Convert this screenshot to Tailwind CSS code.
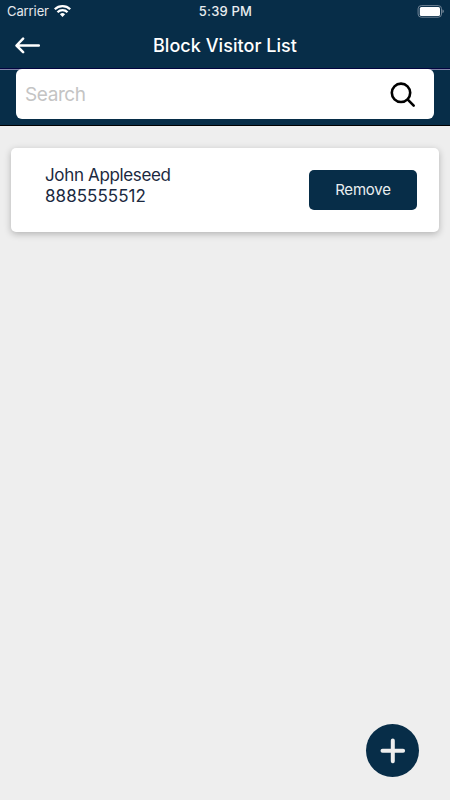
<!DOCTYPE html>
<html lang="en">
<head>
    <meta charset="UTF-8">
    <meta name="viewport" content="width=device-width, initial-scale=1.0">
    <title>Block Visitor List</title>
    <script src="https://cdn.jsdelivr.net/npm/@tailwindcss/browser@4"></script>
</head>
<body class="bg-[#eeeeee] font-[Inter,sans-serif]">
    <div class="relative flex flex-col h-screen overflow-hidden">

        <header class="bg-[#072d48] text-white">
            <!-- Status bar -->
            <div class="grid grid-cols-3 items-center h-[23px] pl-[7px] pr-[6px] text-[13px] leading-none">
                <div class="flex items-center gap-[5px] text-[#e4e8ec]">
                    <span class="tracking-[-0.1px]">Carrier</span>
                    <svg class="w-[17px] h-[12px] mb-[2px]" viewBox="0 0 17 12" fill="none" stroke="#fff" stroke-width="2.3">
                        <path d="M.8 4.3a11 11 0 0 1 15.4 0"/>
                        <path d="M3.5 7.3a7 7 0 0 1 10 0"/>
                        <path d="M8.5 12 5.9 9.3a3.7 3.7 0 0 1 5.2 0z" fill="#fff" stroke="none"/>
                    </svg>
                </div>
                <span class="text-center font-medium text-[#e9edf0] tracking-[0.2px]">5:39 PM</span>
                <svg class="justify-self-end -mt-px w-[27px] h-[13px]" viewBox="0 0 27 13">
                    <rect x="1.1" y=".6" width="23.4" height="11.6" rx="3.2" fill="none" stroke="#708395"/>
                    <rect x="2.8" y="2" width="20.2" height="9" rx="1.6" fill="#fff"/>
                    <path d="M25.5 4.4c1.7.6 1.7 3.2 0 3.8z" fill="#8595a3"/>
                </svg>
            </div>

            <!-- Title bar -->
            <div class="grid grid-cols-[50px_1fr_50px] items-center h-[46px] border-b border-[#03043f]">
                <button class="pl-[15px]" aria-label="Back">
                    <svg class="block w-[26px] h-[17px]" viewBox="0 0 26 17" fill="none" stroke="#fff" stroke-width="2.5" stroke-linecap="round" stroke-linejoin="round">
                        <path d="M8.1 1.6 1.5 8.5l6.6 6.7M1.8 8.5h22"/>
                    </svg>
                </button>
                <h1 class="text-center text-[18px] leading-none font-medium tracking-[0.05px]">Block Visitor List</h1>
            </div>

            <!-- Search -->
            <div class="h-[57px] px-4 border-t border-t-[#8285a8] border-b border-b-black">
                <div class="flex items-center justify-between -mt-px h-[50px] pt-px pl-[9px] pr-[18px] bg-white rounded-md">
                    <input type="text" placeholder="Search" class="w-60 pt-px text-[19px] font-normal text-black placeholder:text-[#c4c4c4] tracking-[-0.4px] outline-none">
                    <svg class="w-[26px] h-[26px]" viewBox="0 0 26 26" fill="none" stroke="#000" stroke-width="2.6" stroke-linecap="round">
                        <circle cx="11" cy="10.8" r="9.2"/>
                        <path d="m17.8 17.6 5.9 6"/>
                    </svg>
                </div>
            </div>
        </header>

        <main class="flex-1 pt-[22px] px-[11px]">
            <div class="flex justify-between h-[83.5px] pt-[22px] pl-[34px] pr-[22px] bg-white rounded-[5px] shadow-[0_2px_7px_rgba(0,0,0,0.25)]">
                <div class="-mt-[5px] text-[17px] leading-[21px] font-normal text-[#1b2940]">
                    <p class="tracking-[-0.35px]">John Appleseed</p>
                    <p class="tracking-[0.05px]">8885555512</p>
                </div>
                <button class="w-[108px] h-[39.5px] rounded-[5px] bg-[#072d48] text-[15px] font-normal tracking-[-0.2px] text-[#e9edf0]">Remove</button>
            </div>
        </main>

        <button class="absolute right-[31px] bottom-[23px] flex items-center justify-center w-[53px] h-[53px] rounded-full bg-[#072d48]" aria-label="Add">
            <svg class="w-[26px] h-[26px]" viewBox="0 0 26 26" stroke="#eee" stroke-width="4" stroke-linecap="round">
                <path d="M12.8 2.6v20.6M2.5 12.8h20.6"/>
            </svg>
        </button>
    </div>
</body>
</html>
